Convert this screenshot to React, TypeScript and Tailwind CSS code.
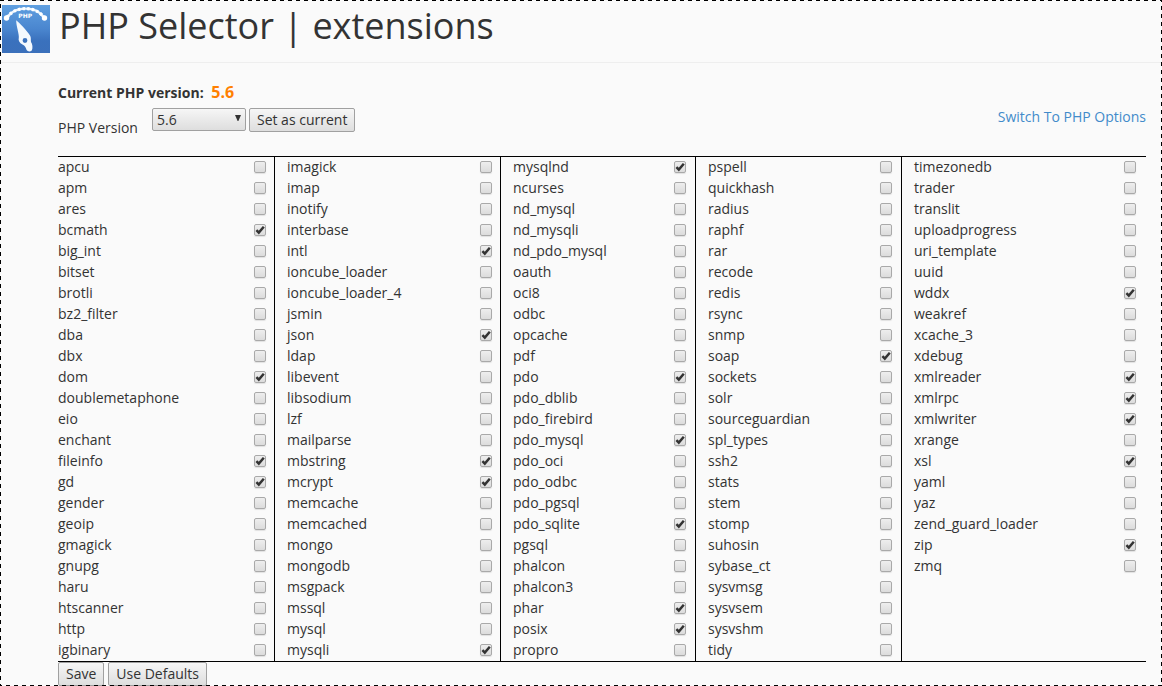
import React, { useState } from "react";

type Column = {
  names: string[];
  className: string;
};

const COLUMNS: Column[] = [
  {
    names: [
      "apcu", "apm", "ares", "bcmath", "big_int", "bitset", "brotli", "bz2_filter",
      "dba", "dbx", "dom", "doublemetaphone", "eio", "enchant", "fileinfo", "gd",
      "gender", "geoip", "gmagick", "gnupg", "haru", "htscanner", "http", "igbinary",
    ],
    className: "border-r border-black pr-2",
  },
  {
    names: [
      "imagick", "imap", "inotify", "interbase", "intl", "ioncube_loader", "ioncube_loader_4", "jsmin",
      "json", "ldap", "libevent", "libsodium", "lzf", "mailparse", "mbstring", "mcrypt",
      "memcache", "memcached", "mongo", "mongodb", "msgpack", "mssql", "mysql", "mysqli",
    ],
    className: "border-r border-black pl-3 pr-2",
  },
  {
    names: [
      "mysqlnd", "ncurses", "nd_mysql", "nd_mysqli", "nd_pdo_mysql", "oauth", "oci8", "odbc",
      "opcache", "pdf", "pdo", "pdo_dblib", "pdo_firebird", "pdo_mysql", "pdo_oci", "pdo_odbc",
      "pdo_pgsql", "pdo_sqlite", "pgsql", "phalcon", "phalcon3", "phar", "posix", "propro",
    ],
    className: "border-r border-black pl-3 pr-[9px]",
  },
  {
    names: [
      "pspell", "quickhash", "radius", "raphf", "rar", "recode", "redis", "rsync",
      "snmp", "soap", "sockets", "solr", "sourceguardian", "spl_types", "ssh2", "stats",
      "stem", "stomp", "suhosin", "sybase_ct", "sysvmsg", "sysvsem", "sysvshm", "tidy",
    ],
    className: "border-r border-black pl-3 pr-[9px]",
  },
  {
    names: [
      "timezonedb", "trader", "translit", "uploadprogress", "uri_template", "uuid", "wddx", "weakref",
      "xcache_3", "xdebug", "xmlreader", "xmlrpc", "xmlwriter", "xrange", "xsl", "yaml",
      "yaz", "zend_guard_loader", "zip", "zmq",
    ],
    className: "pl-3 pr-2.5",
  },
];

const DEFAULTS = [
  "bcmath", "dom", "fileinfo", "gd", "intl", "json", "mbstring", "mcrypt", "mysqli", "mysqlnd",
  "pdo", "pdo_mysql", "pdo_sqlite", "phar", "posix", "soap", "wddx", "xmlreader", "xmlrpc",
  "xmlwriter", "xsl", "zip",
];

const VERSIONS = ["5.2", "5.3", "5.4", "5.5", "5.6", "7.0", "7.1"];

function SelectorIcon() {
  return (
    <svg viewBox="0 0 48 48" className="size-12 shrink-0" aria-hidden="true">
      <defs>
        <linearGradient id="tile" x1="0" y1="0" x2="0" y2="1">
          <stop offset="0" stopColor="#5f9fe0" />
          <stop offset="0.5" stopColor="#4a86cf" />
          <stop offset="0.75" stopColor="#3a71bd" />
          <stop offset="1" stopColor="#3b70bb" />
        </linearGradient>
      </defs>
      <rect width="48" height="48" fill="url(#tile)" />
      <path d="M5 12.5 C13 0.6 34 0.6 42 12.5" fill="none" stroke="#eef6fd" strokeWidth="2.4" />
      <path d="M5 12.5 C13 0.6 34 0.6 42 12.5" fill="none" stroke="#fff" strokeWidth="3.2" strokeDasharray="2.4 2.2" />
      <circle cx="4.5" cy="13" r="2.7" fill="#fff" />
      <circle cx="42.5" cy="13" r="2.7" fill="#fff" />
      <text
        x="23.2"
        y="12.8"
        textAnchor="middle"
        fontSize="6"
        fontWeight="bold"
        fontFamily="DejaVu Sans, sans-serif"
        fill="#fff"
      >
        PHP
      </text>
      <path
        fillRule="evenodd"
        d="M14.2 15.2 C17.5 18 25 25.5 28 30.5 C29.3 32.5 28.6 35 29 37 C30.5 39 31 43 29.8 45.5 C28 47 25.5 46.5 24.6 45 C23.8 42.5 23 40.5 20.5 39.5 C17.5 38 16 35.5 16.8 32.5 C17.4 30 14 20 14.2 15.2 Z M23 33.1 A2.4 2.4 0 1 0 23 37.9 A2.4 2.4 0 1 0 23 33.1 Z"
        fill="#f4f9fe"
      />
    </svg>
  );
}

type ExtensionRowProps = {
  name: string;
  checked: boolean;
  onToggle: (name: string) => void;
};

function ExtensionRow({ name, checked, onToggle }: ExtensionRowProps) {
  return (
    <li className="pb-px">
      <label className="flex h-5 items-center justify-between leading-5">
        {name}
        <span className="grid shrink-0 place-items-center">
          <input
            type="checkbox"
            name={name}
            checked={checked}
            onChange={() => onToggle(name)}
            className="col-start-1 row-start-1 size-3 appearance-none rounded-[2px] border border-[#a9a9a9] bg-linear-to-b from-[#eeeeee] to-[#dcdcdc] shadow-[0_1px_1px_#0000001a]"
          />
          {checked ? (
            <svg viewBox="0 0 12 12" className="pointer-events-none col-start-1 row-start-1 size-3" aria-hidden="true">
              <path d="M2.4 6.2 L4.8 8.6 L9.8 2.8" fill="none" stroke="#333" strokeWidth="2.5" />
            </svg>
          ) : null}
        </span>
      </label>
    </li>
  );
}

type ButtonProps = {
  children: React.ReactNode;
  onClick?: () => void;
};

function Button({ children, onClick }: ButtonProps) {
  return (
    <button
      type="button"
      onClick={onClick}
      className="h-6 rounded-[2px] border border-[#a0a0a0] bg-linear-to-b from-[#f6f6f6] to-[#dedede] px-[7px] leading-5"
    >
      {children}
    </button>
  );
}

// dashed frame, 4px on / 4px off
function Frame() {
  return (
    <svg
      className="pointer-events-none absolute inset-0 size-full"
      stroke="#000"
      strokeWidth="2"
      strokeDasharray="4 4"
      aria-hidden="true"
    >
      <line x1="0" y1="0" x2="100%" y2="0" />
      <line x1="100%" y1="100%" x2="0" y2="100%" />
      <line x1="0" y1="0" x2="0" y2="100%" strokeDashoffset="4" />
      <line x1="100%" y1="100%" x2="100%" y2="0" strokeDashoffset="4" />
    </svg>
  );
}

export default function App() {
  const [current, setCurrent] = useState("5.6");
  const [version, setVersion] = useState("5.6");
  const [enabled, setEnabled] = useState<string[]>(DEFAULTS);

  const toggle = (name: string) =>
    setEnabled((prev) => (prev.includes(name) ? prev.filter((n) => n !== name) : [...prev, name]));

  return (
    <div className="relative min-h-screen overflow-hidden bg-[#fafafa] font-['Open_Sans',sans-serif] text-sm text-[#333]">
      <header className="flex items-start gap-[9px] border-b border-[#eee] pt-[5px] pb-[9px] pl-0.5">
        <SelectorIcon />
        <h1 className="text-4xl leading-[42px]">PHP Selector | extensions</h1>
      </header>

      <main className="pr-4 pl-[58px]">
        <p className="pt-[17px] leading-6 font-bold">
          Current PHP version: <span className="ml-1 text-base text-[#ff8000]">{current}</span>
        </p>

        <div className="flex items-start pt-[3px]">
          <label htmlFor="version" className="mr-3.5 pt-2.5 leading-5">
            PHP Version
          </label>
          <span className="mr-[3px] grid w-[94px] items-center">
            <select
              id="version"
              value={version}
              onChange={(e) => setVersion(e.target.value)}
              className="col-start-1 row-start-1 h-[23px] appearance-none rounded-[2px] border border-[#a0a0a0] bg-linear-to-b from-[#f6f6f6] to-[#dedede] px-1 leading-5"
            >
              {VERSIONS.map((v) => (
                <option key={v}>{v}</option>
              ))}
            </select>
            <svg
              viewBox="0 0 6 6"
              className="pointer-events-none col-start-1 row-start-1 mr-[5px] mb-[3px] size-1.5 justify-self-end"
              aria-hidden="true"
            >
              <path d="M0 0 H6 L3.4 6 H2.6 Z" fill="#333" />
            </svg>
          </span>
          <Button onClick={() => setCurrent(version)}>Set as current</Button>
          <a href="#options" className="ml-auto leading-[18px] text-[#428bca]">
            Switch To PHP Options
          </a>
        </div>

        <div className="mt-[18px] grid grid-cols-[217fr_226fr_195fr_206fr_244fr] border-y border-black">
          {COLUMNS.map((col) => (
            <ul key={col.names[0]} className={col.className}>
              {col.names.map((name) => (
                <ExtensionRow key={name} name={name} checked={enabled.includes(name)} onToggle={toggle} />
              ))}
            </ul>
          ))}
        </div>

        <div className="flex gap-1">
          <Button>Save</Button>
          <Button onClick={() => setEnabled(DEFAULTS)}>Use Defaults</Button>
        </div>
      </main>

      <Frame />
    </div>
  );
}
